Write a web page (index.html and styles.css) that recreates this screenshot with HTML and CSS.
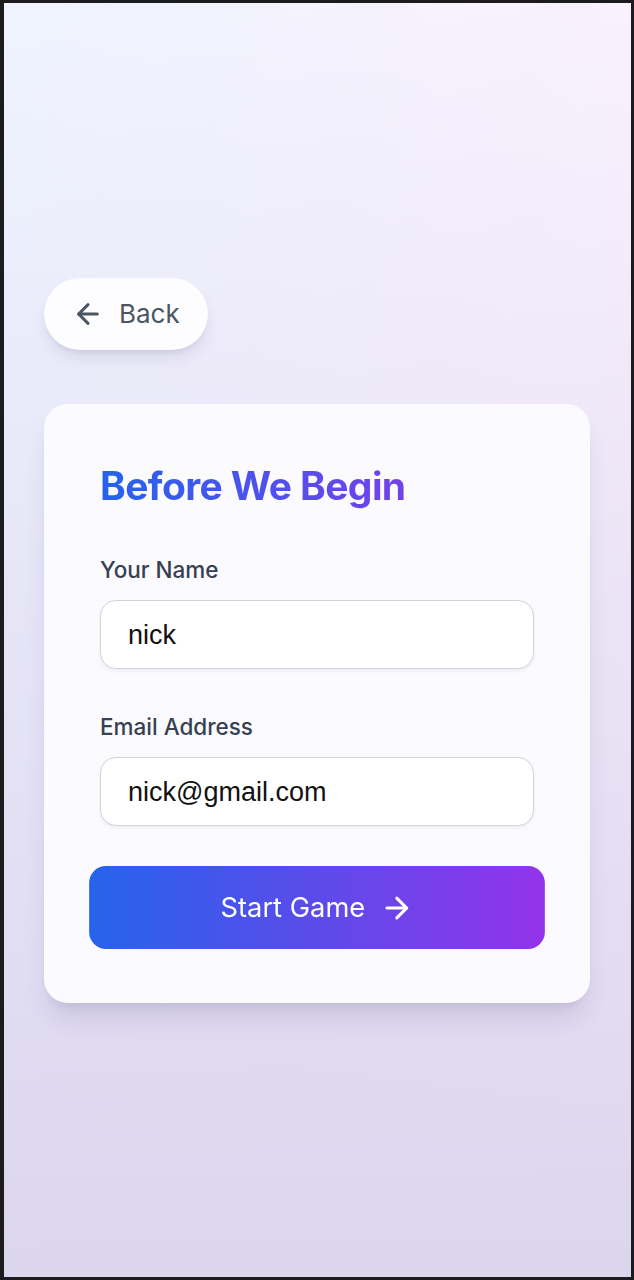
FILE: index.html
```html
<!DOCTYPE html>
<html lang="en">
<head>
<meta charset="utf-8">
<meta name="viewport" content="width=device-width, initial-scale=1">
<title>Before We Begin</title>
<link rel="stylesheet" href="styles.css">
</head>
<body>
<main class="screen">
  <div class="stack">
    <button class="back" type="button">
      <svg class="icon" viewBox="0 0 24 24" fill="none" stroke="currentColor" stroke-width="2.25" stroke-linecap="round" stroke-linejoin="round"><path d="M19 12H5"/><path d="M12 19l-7-7 7-7"/></svg>
      <span>Back</span>
    </button>
    <section class="card">
      <h1 class="title">Before We Begin</h1>
      <div class="field">
        <label class="label" for="name">Your Name</label>
        <input class="input" id="name" type="text" value="nick">
      </div>
      <div class="field">
        <label class="label" for="email">Email Address</label>
        <input class="input" id="email" type="email" value="nick@gmail.com">
      </div>
      <button class="start" type="button">
        <span>Start Game</span>
        <svg class="icon" viewBox="0 0 24 24" fill="none" stroke="currentColor" stroke-width="2.25" stroke-linecap="round" stroke-linejoin="round"><path d="M5 12h14"/><path d="M12 5l7 7-7 7"/></svg>
      </button>
    </section>
  </div>
</main>
</body>
</html>
```
FILE: styles.css
```css
* { box-sizing: border-box; }
html, body { margin: 0; padding: 0; }
body {
  width: 634px;
  height: 1280px;
  border-style: solid;
  border-color: #1c1c1e;
  border-width: 3px 3px 3px 4px;
  background: #1c1c1e;
  font-family: Inter, "Noto Sans", sans-serif;
}
.screen {
  height: 100%;
  display: flex;
  align-items: center;
  padding: 0 41px 0 40px;
  background:
    linear-gradient(to bottom, rgba(220, 213, 238, 0) 0%, rgba(220, 213, 238, 1) 100%),
    linear-gradient(to right, #eff4ff, #f9f1fd);
}
.stack {
  width: 100%;
  display: flex;
  flex-direction: column;
  align-items: flex-start;
  gap: 54px;
}
.back {
  height: 72px;
  display: flex;
  align-items: center;
  gap: 15px;
  padding: 0 28px;
  border: 0;
  border-radius: 999px;
  background: #fdfdff;
  color: #4b5563;
  font-family: Inter, sans-serif;
  font-size: 26px;
  font-weight: 400;
  box-shadow: 0 10px 15px -3px rgba(60, 50, 110, 0.12), 0 4px 6px -4px rgba(60, 50, 110, 0.12);
}
.icon { width: 32px; height: 32px; flex: none; display: block; }
.card {
  width: 100%;
  background: #fafaff;
  border-radius: 24px;
  padding: 56px;
  display: flex;
  flex-direction: column;
  gap: 44px;
  box-shadow: 0 20px 25px -5px rgba(60, 50, 110, 0.12), 0 8px 10px -6px rgba(60, 50, 110, 0.1);
}
.title {
  margin: 0;
  font-size: 39px;
  line-height: 52px;
  font-weight: 700;
  letter-spacing: -0.6px;
  background: linear-gradient(to right, #2563eb, #9333ea);
  -webkit-background-clip: text;
  background-clip: text;
  color: transparent;
}
.field {
  display: flex;
  flex-direction: column;
  gap: 16px;
}
.label {
  font-size: 22.5px;
  line-height: 28px;
  font-weight: 500;
  color: #374151;
}
.input {
  width: 100%;
  height: 69px;
  padding: 3px 27px 0;
  border: 1px solid #d1d5db;
  border-radius: 16px;
  background: #ffffff;
  font-family: "Liberation Sans", Arial, sans-serif;
  font-size: 27px;
  color: #111111;
  box-shadow: 0 2px 4px rgba(0, 0, 0, 0.06);
  outline: none;
}
.start {
  margin-top: -2px;
  height: 79px;
  width: 100%;
  display: flex;
  align-items: center;
  justify-content: center;
  gap: 14px;
  border: 0;
  border-radius: 16px;
  background: linear-gradient(to right, #2563eb, #9333ea);
  color: #ffffff;
  font-family: Inter, sans-serif;
  font-size: 26px;
  font-weight: 400;
  transform: scale(1.05);
}
```
